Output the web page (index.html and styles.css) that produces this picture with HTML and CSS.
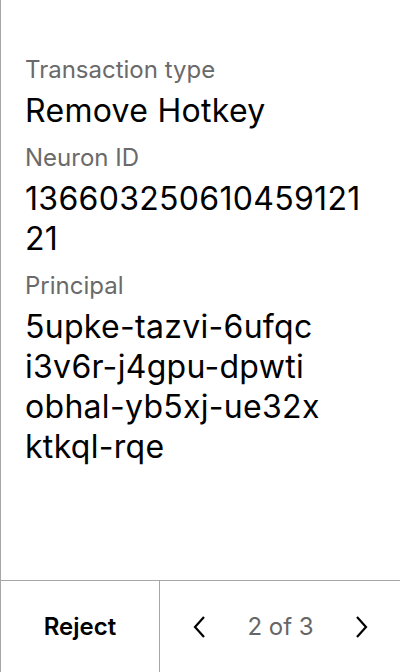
FILE: index.html
```html
<!DOCTYPE html>
<html>
<head>
<meta charset="utf-8">
<link rel="stylesheet" href="styles.css">
</head>
<body>
<div class="screen">
  <main class="content">
    <div class="field">
      <div class="label">Transaction type</div>
      <div class="value">Remove Hotkey</div>
    </div>
    <div class="field">
      <div class="label">Neuron ID</div>
      <div class="value">13660325061045912121</div>
    </div>
    <div class="field">
      <div class="label">Principal</div>
      <div class="value">5upke-tazvi-6ufqc<br>i3v6r-j4gpu-dpwti<br>obhal-yb5xj-ue32x<br>ktkql-rqe</div>
    </div>
  </main>
  <footer class="footer">
    <div class="reject">Reject</div>
    <div class="pager">
      <svg class="chev" width="16" height="26" viewBox="0 0 16 26"><path d="M13 3 L4 13 L13 23" fill="none" stroke="#000" stroke-width="2.2"/></svg>
      <span class="count">2 of 3</span>
      <svg class="chev" width="16" height="26" viewBox="0 0 16 26"><path d="M3 3 L12 13 L3 23" fill="none" stroke="#000" stroke-width="2.2"/></svg>
    </div>
  </footer>
</div>
</body>
</html>
```
FILE: styles.css
```css
html, body {
  margin: 0;
  padding: 0;
  background: #fff;
}
.screen {
  width: 400px;
  height: 672px;
  box-sizing: border-box;
  border-left: 1px solid #a6a6a6;
  display: flex;
  flex-direction: column;
  font-family: Inter, "Noto Sans", sans-serif;
  color: #000;
}
.content {
  flex: 1;
  padding: 54px 24px 0 24px;
  display: flex;
  flex-direction: column;
  gap: 11px;
}
.label {
  font-size: 24px;
  line-height: 32px;
  color: #6a6a6a;
}
.value {
  font-size: 32px;
  line-height: 40px;
  margin-top: 5px;
  letter-spacing: 0.3px;
  word-break: break-all;
}
.footer {
  height: 92px;
  box-sizing: border-box;
  border-top: 1px solid #a6a6a6;
  display: grid;
  grid-template-columns: 159px 1fr;
}
.reject {
  border-right: 1px solid #a6a6a6;
  display: flex;
  align-items: center;
  justify-content: center;
  font-size: 24px;
  font-weight: 600;
}
.pager {
  display: flex;
  align-items: center;
  justify-content: space-between;
  padding: 0 30px 0 31px;
}
.count {
  font-size: 24px;
  color: #666;
}
```
